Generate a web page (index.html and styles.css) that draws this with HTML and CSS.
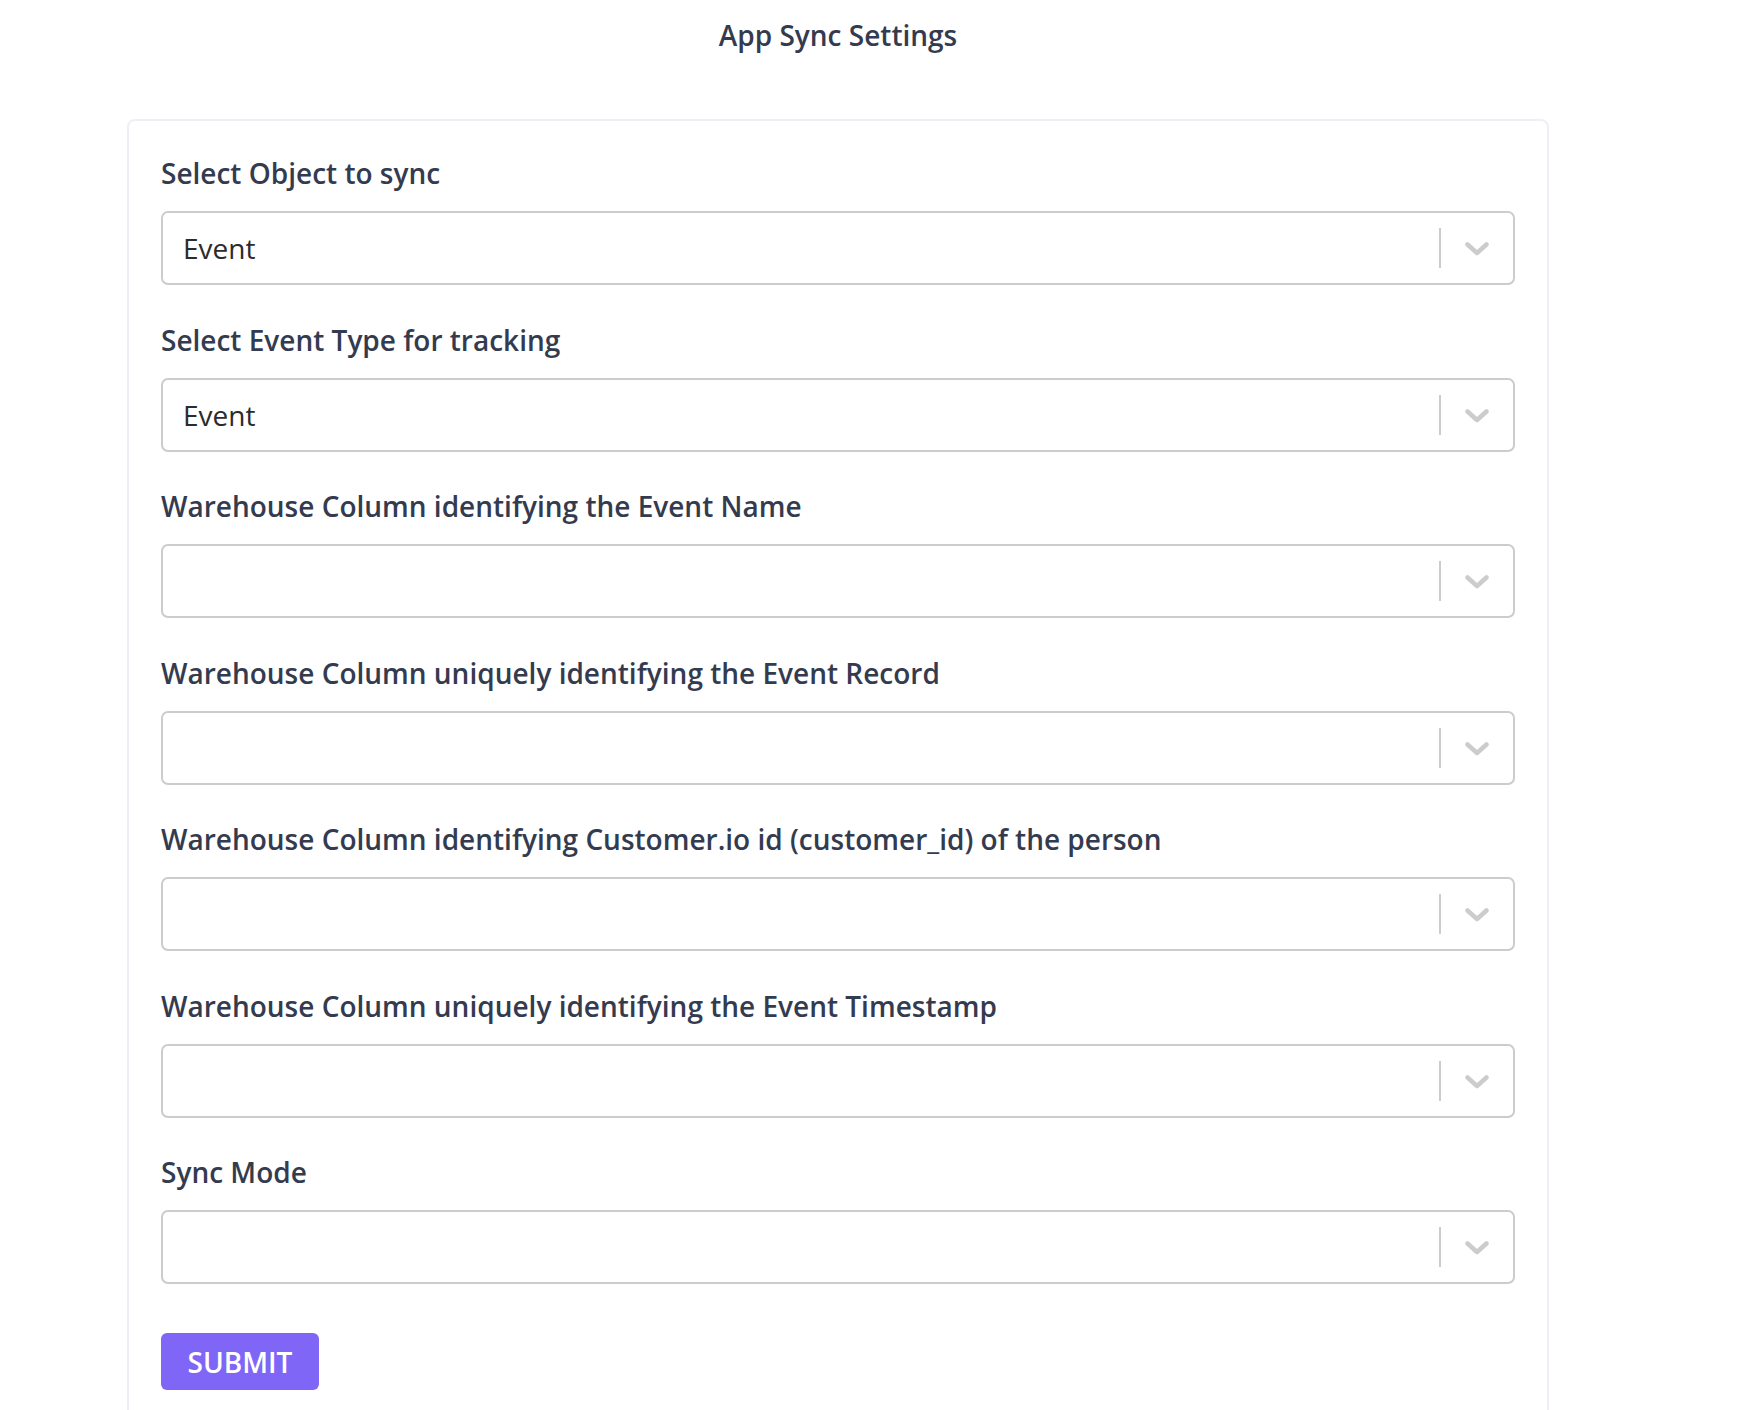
FILE: index.html
```html
<!DOCTYPE html>
<html>
<head>
<meta charset="utf-8">
<link rel="stylesheet" href="styles.css">
</head>
<body>
<div class="page">
  <h1 class="title">App Sync Settings</h1>
  <div class="card">
    <div class="field">
      <label class="label">Select Object to sync</label>
      <div class="select"><span class="value">Event</span><span class="indicators"><span class="sep"></span><svg class="chev" viewBox="0 0 24 14" width="24" height="14"><path d="M2.5 2.5 L12 11 L21.5 2.5" fill="none" stroke="#cccccc" stroke-width="4.5" stroke-linecap="round" stroke-linejoin="round"/></svg></span></div>
    </div>
    <div class="field">
      <label class="label">Select Event Type for tracking</label>
      <div class="select"><span class="value">Event</span><span class="indicators"><span class="sep"></span><svg class="chev" viewBox="0 0 24 14" width="24" height="14"><path d="M2.5 2.5 L12 11 L21.5 2.5" fill="none" stroke="#cccccc" stroke-width="4.5" stroke-linecap="round" stroke-linejoin="round"/></svg></span></div>
    </div>
    <div class="field">
      <label class="label">Warehouse Column identifying the Event Name</label>
      <div class="select"><span class="value"></span><span class="indicators"><span class="sep"></span><svg class="chev" viewBox="0 0 24 14" width="24" height="14"><path d="M2.5 2.5 L12 11 L21.5 2.5" fill="none" stroke="#cccccc" stroke-width="4.5" stroke-linecap="round" stroke-linejoin="round"/></svg></span></div>
    </div>
    <div class="field">
      <label class="label">Warehouse Column uniquely identifying the Event Record</label>
      <div class="select"><span class="value"></span><span class="indicators"><span class="sep"></span><svg class="chev" viewBox="0 0 24 14" width="24" height="14"><path d="M2.5 2.5 L12 11 L21.5 2.5" fill="none" stroke="#cccccc" stroke-width="4.5" stroke-linecap="round" stroke-linejoin="round"/></svg></span></div>
    </div>
    <div class="field">
      <label class="label">Warehouse Column identifying Customer.io id (customer_id) of the person</label>
      <div class="select"><span class="value"></span><span class="indicators"><span class="sep"></span><svg class="chev" viewBox="0 0 24 14" width="24" height="14"><path d="M2.5 2.5 L12 11 L21.5 2.5" fill="none" stroke="#cccccc" stroke-width="4.5" stroke-linecap="round" stroke-linejoin="round"/></svg></span></div>
    </div>
    <div class="field">
      <label class="label">Warehouse Column uniquely identifying the Event Timestamp</label>
      <div class="select"><span class="value"></span><span class="indicators"><span class="sep"></span><svg class="chev" viewBox="0 0 24 14" width="24" height="14"><path d="M2.5 2.5 L12 11 L21.5 2.5" fill="none" stroke="#cccccc" stroke-width="4.5" stroke-linecap="round" stroke-linejoin="round"/></svg></span></div>
    </div>
    <div class="field">
      <label class="label">Sync Mode</label>
      <div class="select"><span class="value"></span><span class="indicators"><span class="sep"></span><svg class="chev" viewBox="0 0 24 14" width="24" height="14"><path d="M2.5 2.5 L12 11 L21.5 2.5" fill="none" stroke="#cccccc" stroke-width="4.5" stroke-linecap="round" stroke-linejoin="round"/></svg></span></div>
    </div>
    <button class="submit">SUBMIT</button>
  </div>
</div>
</body>
</html>
```

FILE: styles.css
```css
html, body {
  margin: 0;
  padding: 0;
  background: #ffffff;
  font-family: "Open Sans", "Liberation Sans", sans-serif;
}
.page {
  width: 1740px;
  height: 1410px;
  overflow: hidden;
}
.title {
  margin: 0;
  width: 1676px;
  padding-top: 15px;
  height: 119px;
  box-sizing: border-box;
  text-align: center;
  font-size: 28px;
  line-height: 40px;
  font-weight: 600;
  color: #343b4f;
}
.card {
  margin-left: 127px;
  width: 1422px;
  box-sizing: border-box;
  border: 2px solid #efeef5;
  border-radius: 8px;
  padding: 31px 32px 60px 32px;
}
.field {
  display: flex;
  flex-direction: column;
  margin-bottom: 33.5px;
}
.label {
  font-size: 28px;
  line-height: 40px;
  font-weight: 600;
  color: #343b4f;
  margin-top: 1px;
  margin-bottom: 18px;
}
.select {
  height: 74px;
  box-sizing: border-box;
  border: 2px solid #cccccc;
  border-radius: 7px;
  display: flex;
  align-items: center;
}
.value {
  flex: 1;
  padding-left: 20px;
  font-size: 28px;
  color: #2b2b2b;
}
.indicators {
  display: flex;
  align-items: center;
  height: 100%;
}
.sep {
  width: 2px;
  height: 40px;
  background: #cccccc;
}
.chev {
  display: block;
  margin: 2px 24px 0 24px;
}
.submit {
  display: block;
  height: 57px;
  width: 158px;
  border: none;
  border-radius: 6px;
  background: #7f66f7;
  color: #ffffff;
  font-family: "Open Sans", "Liberation Sans", sans-serif;
  font-size: 28px;
  font-weight: 600;
  padding: 0;
  margin-top: 49px;
}
```
